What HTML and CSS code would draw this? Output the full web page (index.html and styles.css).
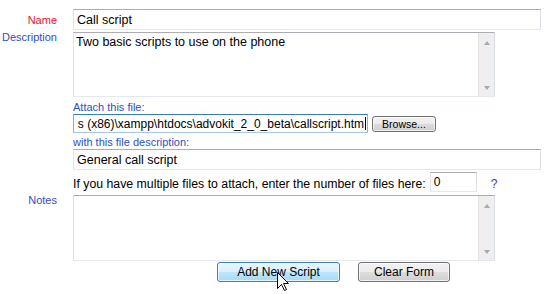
FILE: index.html
```html
<!DOCTYPE html>
<html lang="en">
<head>
  <meta charset="UTF-8">
  <title>Add Script</title>
  <link rel="stylesheet" href="styles.css">
</head>
<body>
  <form class="script-form">
    <label class="label label-required">Name</label>
    <input class="text-field name-field" type="text" value="Call script">

    <label class="label label-top">Description</label>
    <div class="area">
      <textarea class="area-text">Two basic scripts to use on the phone</textarea>
      <div class="scrollbar"><span class="arrow-up"></span><span class="arrow-down"></span></div>
    </div>

    <div class="field">
      <div class="caption">Attach this file:</div>
      <div class="file-row">
        <div class="file-path"><span class="path-text">s (x86)\xampp\htdocs\advokit_2_0_beta\callscript.htm</span><span class="caret"></span></div>
        <button type="button" class="win-btn browse">Browse...</button>
      </div>
      <div class="caption caption-second">with this file description:</div>
      <input class="text-field desc-field" type="text" value="General call script">
      <div class="count-row">
        <span class="count-text">If you have multiple files to attach, enter the number of files here:</span>
        <input class="text-field count-field" type="text" value="0">
        <a class="help">?</a>
      </div>
    </div>

    <label class="label label-top notes-label">Notes</label>
    <div class="area notes-area">
      <textarea class="area-text"></textarea>
      <div class="scrollbar"><span class="arrow-up"></span><span class="arrow-down"></span></div>
    </div>

    <div class="field actions">
      <button type="button" class="win-btn add-btn">Add New Script</button>
      <button type="button" class="win-btn clear-btn">Clear Form</button>
    </div>
  </form>

  <svg class="pointer" width="13" height="20" viewBox="0 0 13 20">
    <path d="M0.5 0.5 V16.5 L4.5 12.5 L7.5 18.5 L9.5 17.5 L6.5 11.5 H11.5 Z" fill="#fff" stroke="#000" stroke-width="1"/>
  </svg>
</body>
</html>
```

FILE: styles.css
```css
body {
  margin: 0;
  background: #fff;
  color: #000;
  font-family: "Liberation Sans", Arial, sans-serif;
}
.script-form {
  display: grid;
  grid-template-columns: 57px 468px;
  column-gap: 16px;
  padding-top: 9px;
}
.label {
  font-size: 11px;
  line-height: 13px;
  text-align: right;
  color: #2f4fbf;
  white-space: nowrap;
}
.label-required {
  color: #ee1122;
  align-self: center;
}
.label-top {
  align-self: start;
  line-height: 11px;
}
.text-field {
  box-sizing: border-box;
  width: 100%;
  height: 21px;
  margin: 0;
  padding: 0 3px;
  border: 1px solid;
  border-color: #abadb3 #dbdfe6 #e3e9ef #e2e3ea;
  font: 12.5px "Liberation Sans", Arial, sans-serif;
  color: #000;
  outline: none;
}
.name-field {
  margin-bottom: 2px;
}
.area {
  box-sizing: border-box;
  display: flex;
  width: 422px;
  height: 65px;
  border: 1px solid;
  border-color: #abadb3 #dbdfe6 #e3e9ef #e2e3ea;
}
.area-text {
  flex: 1;
  margin: 0;
  padding: 2px 2px;
  border: 0;
  resize: none;
  overflow: hidden;
  outline: none;
  font: 12.5px/15px "Liberation Sans", Arial, sans-serif;
  color: #000;
}
.scrollbar {
  box-sizing: border-box;
  width: 16px;
  background: #efefef;
  border-left: 1px solid #e2e2e2;
  display: flex;
  flex-direction: column;
  justify-content: space-between;
  align-items: center;
  padding: 8px 0 6px;
}
.arrow-up, .arrow-down {
  width: 0;
  height: 0;
  border-left: 3.5px solid transparent;
  border-right: 3.5px solid transparent;
}
.arrow-up {
  border-bottom: 4px solid #a9a9a9;
}
.arrow-down {
  border-top: 4px solid #a9a9a9;
}
.field {
  grid-column: 2;
}
.caption {
  margin-top: 4px;
  font-size: 11px;
  line-height: 13px;
  color: #2f4fbf;
}
.caption-second {
  margin-top: 3px;
}
.file-row {
  display: flex;
  align-items: center;
  gap: 4px;
  height: 19px;
}
.file-path {
  box-sizing: border-box;
  width: 295px;
  height: 19px;
  border: 1px solid;
  border-color: #3d7bad #8db2d6 #a9c7e4 #8db2d6;
  display: flex;
  justify-content: flex-end;
  align-items: center;
  overflow: hidden;
  white-space: nowrap;
  font-size: 12px;
  padding-right: 1px;
}
.path-text {
  flex-shrink: 0;
}
.caret {
  flex-shrink: 0;
  width: 1px;
  height: 13px;
  margin-left: 1px;
  background: #000;
}
.win-btn {
  box-sizing: border-box;
  height: 20px;
  padding: 0;
  border: 1px solid #707070;
  border-radius: 3px;
  background: linear-gradient(#f2f2f2, #ebebeb 50%, #dddddd 50%, #cfcfcf);
  box-shadow: inset 0 0 0 1px rgba(255, 255, 255, 0.7);
  font: 12px "Liberation Sans", Arial, sans-serif;
  color: #000;
}
.browse {
  width: 64px;
  height: 16px;
  font-size: 10.5px;
}
.count-row {
  display: flex;
  align-items: center;
  height: 20px;
  margin-top: 2px;
}
.count-text {
  font-size: 12.3px;
  margin-top: 3px;
}
.count-field {
  width: 47px;
  height: 20px;
  margin-left: 4px;
  font-size: 12px;
}
.help {
  margin-left: 14px;
  margin-top: 3px;
  font-size: 12px;
  color: #3b3bbf;
}
.notes-label, .notes-area {
  margin-top: 3px;
}
.notes-area {
  height: 66px;
}
.actions {
  display: flex;
  gap: 18px;
  padding-left: 144px;
  margin-top: 1px;
}
.add-btn {
  width: 123px;
  border-color: #3c7fb1;
  background: linear-gradient(#eaf6fd, #d9f0fc 50%, #bee6fd 50%, #a7d9f5);
}
.clear-btn {
  width: 92px;
}
.pointer {
  position: absolute;
  left: 277px;
  top: 272px;
}
```
